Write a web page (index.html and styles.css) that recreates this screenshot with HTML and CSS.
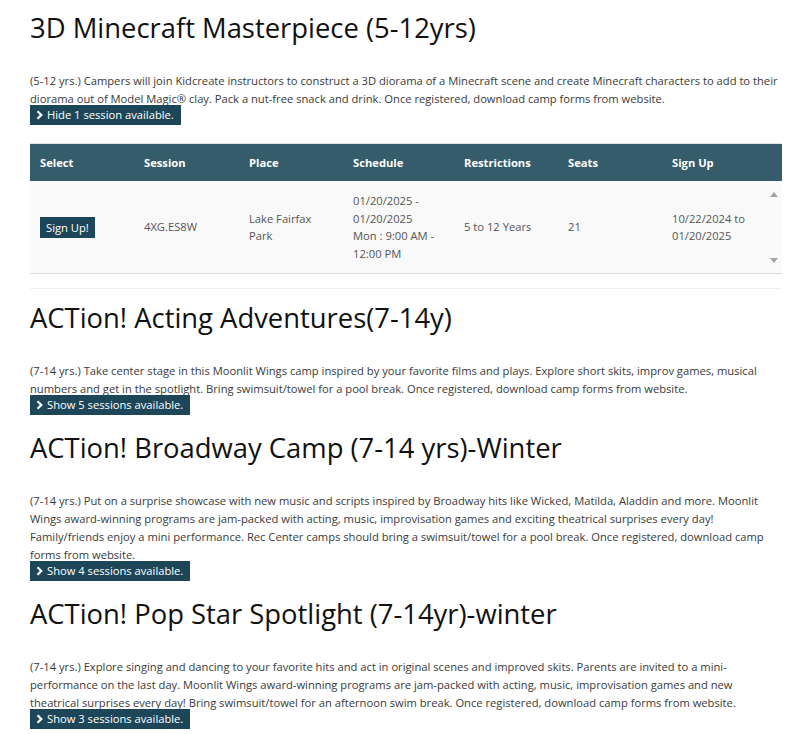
FILE: index.html
```html
<!DOCTYPE html>
<html>
<head>
<meta charset="utf-8">
<link rel="stylesheet" href="styles.css">
</head>
<body>
<div class="page">
  <section class="camp">
    <h2 class="camp-title">3D Minecraft Masterpiece (5-12yrs)</h2>
    <p class="camp-desc">(5-12 yrs.) Campers will join Kidcreate instructors to construct a 3D diorama of a Minecraft scene and create Minecraft characters to add to their<br>diorama out of Model Magic® clay. Pack a nut-free snack and drink. Once registered, download camp forms from website.</p>
    <button class="toggle"><svg class="chev" viewBox="0 0 7 10" width="7" height="10"><polyline points="1.5,1.2 5.3,5 1.5,8.8" fill="none" stroke="#fff" stroke-width="2.2"/></svg>Hide 1 session available.</button>
    <div class="sessions">
      <div class="thead">
        <div>Select</div><div>Session</div><div>Place</div><div>Schedule</div><div>Restrictions</div><div>Seats</div><div>Sign Up</div>
      </div>
      <div class="tbody">
        <div class="trow">
          <div><button class="signup">Sign Up!</button></div>
          <div>4XG.ES8W</div>
          <div>Lake Fairfax<br>Park</div>
          <div>01/20/2025 -<br>01/20/2025<br>Mon : 9:00 AM -<br>12:00 PM</div>
          <div>5 to 12 Years</div>
          <div>21</div>
          <div>10/22/2024 to<br>01/20/2025</div>
        </div>
        <div class="scrollbar">
          <span class="arrow up"></span>
          <span class="arrow down"></span>
        </div>
      </div>
    </div>
  </section>

  <section class="camp">
    <h2 class="camp-title">ACTion! Acting Adventures(7-14y)</h2>
    <p class="camp-desc">(7-14 yrs.) Take center stage in this Moonlit Wings camp inspired by your favorite films and plays. Explore short skits, improv games, musical<br>numbers and get in the spotlight. Bring swimsuit/towel for a pool break. Once registered, download camp forms from website.</p>
    <button class="toggle"><svg class="chev" viewBox="0 0 7 10" width="7" height="10"><polyline points="1.5,1.2 5.3,5 1.5,8.8" fill="none" stroke="#fff" stroke-width="2.2"/></svg>Show 5 sessions available.</button>
  </section>

  <section class="camp">
    <h2 class="camp-title">ACTion! Broadway Camp (7-14 yrs)-Winter</h2>
    <p class="camp-desc">(7-14 yrs.) Put on a surprise showcase with new music and scripts inspired by Broadway hits like Wicked, Matilda, Aladdin and more. Moonlit<br>Wings award-winning programs are jam-packed with acting, music, improvisation games and exciting theatrical surprises every day!<br>Family/friends enjoy a mini performance. Rec Center camps should bring a swimsuit/towel for a pool break. Once registered, download camp<br>forms from website.</p>
    <button class="toggle"><svg class="chev" viewBox="0 0 7 10" width="7" height="10"><polyline points="1.5,1.2 5.3,5 1.5,8.8" fill="none" stroke="#fff" stroke-width="2.2"/></svg>Show 4 sessions available.</button>
  </section>

  <section class="camp">
    <h2 class="camp-title">ACTion! Pop Star Spotlight (7-14yr)-winter</h2>
    <p class="camp-desc">(7-14 yrs.) Explore singing and dancing to your favorite hits and act in original scenes and improved skits. Parents are invited to a mini-<br>performance on the last day. Moonlit Wings award-winning programs are jam-packed with acting, music, improvisation games and new<br>theatrical surprises every day! Bring swimsuit/towel for an afternoon swim break. Once registered, download camp forms from website.</p>
    <button class="toggle"><svg class="chev" viewBox="0 0 7 10" width="7" height="10"><polyline points="1.5,1.2 5.3,5 1.5,8.8" fill="none" stroke="#fff" stroke-width="2.2"/></svg>Show 3 sessions available.</button>
  </section>
</div>
</body>
</html>
```
FILE: styles.css
```css
html, body {
  margin: 0;
  padding: 0;
  background: #fff;
}
body {
  font-family: "Open Sans", "Liberation Sans", sans-serif;
  color: #3a3a3a;
}
.page {
  width: 760px;
  padding: 11px 0 0 30px;
}
.camp {
  display: flex;
  flex-direction: column;
  align-items: flex-start;
  margin-bottom: 16px;
}
.camp-title {
  margin: 0 0 27px;
  font-size: 27.4px;
  line-height: 34px;
  font-weight: 400;
  color: #111;
  white-space: nowrap;
}
.camp-desc {
  margin: 0;
  font-size: 11.2px;
  line-height: 18px;
  color: #3a3a3a;
  white-space: nowrap;
}
.toggle {
  margin-top: -3px;
  display: flex;
  align-items: center;
  gap: 4px;
  height: 20px;
  padding: 0 7px 0 6px;
  border: 0;
  background: #1d4759;
  color: #fff;
  font-family: inherit;
  font-size: 11.2px;
  line-height: 20px;
}
.chev {
  display: block;
}
.sessions {
  margin-top: 18px;
  margin-bottom: -4px;
  width: 752px;
  border-top: 1px solid #dfe5e8;
  border-bottom: 1px solid #f0f0f0;
  padding-bottom: 14px;
}
.thead {
  display: grid;
  grid-template-columns: 104px 105px 104px 111px 104px 104px 1fr;
  height: 37px;
  align-items: center;
  background: #355c6b;
  color: #fff;
  font-size: 11.2px;
  font-weight: 700;
}
.thead div {
  padding-left: 10px;
}
.tbody {
  display: flex;
  background: #f9f9f9;
  border-bottom: 1px solid #ddd;
}
.trow {
  flex: 1;
  display: grid;
  grid-template-columns: 104px 105px 104px 111px 104px 104px 1fr;
  align-items: center;
  padding: 11px 0;
  font-size: 11.2px;
  line-height: 17.5px;
  color: #555;
}
.trow > div {
  padding-left: 10px;
}
.signup {
  border: 0;
  background: #1d4759;
  color: #fff;
  font-family: inherit;
  font-size: 11.2px;
  height: 21px;
  line-height: 21px;
  padding: 0 6px;
}
.scrollbar {
  width: 17px;
  display: flex;
  flex-direction: column;
  justify-content: space-between;
  align-items: center;
  padding: 11px 0 10px;
  background: #fafafa;
}
.arrow {
  width: 0;
  height: 0;
  border-left: 4.5px solid transparent;
  border-right: 4.5px solid transparent;
}
.arrow.up {
  border-bottom: 5px solid #a3a3a3;
}
.arrow.down {
  border-top: 5px solid #a3a3a3;
}
```
